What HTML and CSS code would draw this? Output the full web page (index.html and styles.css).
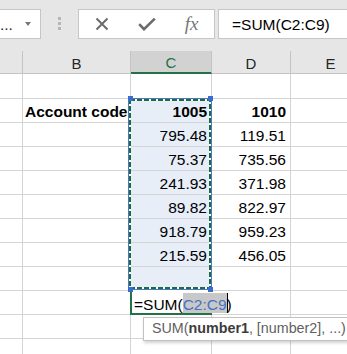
FILE: index.html
```html
<!DOCTYPE html>
<html>
<head>
<meta charset="utf-8">
<link rel="stylesheet" href="styles.css">
</head>
<body>
<div class="app">
  <div class="toolbar">
    <div class="namebox"><span class="nb-text">...</span><span class="nb-arrow"></span></div>
    <div class="grip"><i></i><i></i><i></i></div>
    <div class="fbtns">
      <div class="fbtn">
        <svg width="14" height="14" viewBox="0 0 14 14"><path d="M1.5 1.5 L12.5 12.5 M12.5 1.5 L1.5 12.5" stroke="#6b6b6b" stroke-width="2" fill="none"/></svg>
      </div>
      <div class="fbtn">
        <svg width="18" height="14" viewBox="0 0 18 14"><path d="M1.2 7.2 L6 12.2 L16.8 1.6" stroke="#6b6b6b" stroke-width="2.6" fill="none"/></svg>
      </div>
      <div class="fbtn"><span class="fx">fx</span></div>
    </div>
    <div class="finput">=SUM(C2:C9)</div>
  </div>

  <div class="sheet">
    <div class="grid">
      <div class="c h"></div><div class="c h">B</div><div class="c h hsel">C</div><div class="c h">D</div><div class="c h">E</div>

      <div class="c"></div><div class="c"></div><div class="c"></div><div class="c"></div><div class="c"></div>

      <div class="c"></div><div class="c b">Account code</div><div class="c num b hl">1005</div><div class="c num b">1010</div><div class="c"></div>
      <div class="c"></div><div class="c"></div><div class="c num hl">795.48</div><div class="c num">119.51</div><div class="c"></div>
      <div class="c"></div><div class="c"></div><div class="c num hl">75.37</div><div class="c num">735.56</div><div class="c"></div>
      <div class="c"></div><div class="c"></div><div class="c num hl">241.93</div><div class="c num">371.98</div><div class="c"></div>
      <div class="c"></div><div class="c"></div><div class="c num hl">89.82</div><div class="c num">822.97</div><div class="c"></div>
      <div class="c"></div><div class="c"></div><div class="c num hl">918.79</div><div class="c num">959.23</div><div class="c"></div>
      <div class="c"></div><div class="c"></div><div class="c num hl">215.59</div><div class="c num">456.05</div><div class="c"></div>
      <div class="c"></div><div class="c"></div><div class="c hl"></div><div class="c"></div><div class="c"></div>

      <div class="c"></div><div class="c"></div><div class="c"></div><div class="c"></div><div class="c"></div>
      <div class="c"></div><div class="c"></div><div class="c"></div><div class="c"></div><div class="c"></div>
      <div class="c"></div><div class="c"></div><div class="c"></div><div class="c"></div><div class="c"></div>
    </div>

    <div class="edit">=SUM(<span class="ref">C2:C9</span><span class="caret"></span>)</div>

    <svg class="selbox" width="84" height="192" viewBox="0 0 84 192">
      <rect x="0.5" y="0.5" width="83" height="191" fill="none" stroke="#4a78c8" stroke-width="1"/>
      <rect x="2" y="2" width="80" height="188" fill="none" stroke="#ffffff" stroke-width="2"/>
      <rect x="2" y="2" width="80" height="188" fill="none" stroke="#1e6b3f" stroke-width="2" stroke-dasharray="5 2"/>
    </svg>
    <span class="handle h-tl"></span>
    <span class="handle h-tr"></span>
    <span class="handle h-bl"></span>
    <span class="handle h-br"></span>

    <div class="tip">SUM(<b>number1</b>, [number2], ...)</div>
  </div>
</div>
</body>
</html>
```

FILE: styles.css
```css
* { box-sizing: border-box; }
html, body { margin: 0; padding: 0; }
body {
  width: 347px;
  height: 354px;
  overflow: hidden;
  background: #ffffff;
  font-family: "Liberation Sans", Arial, sans-serif;
  color: #000;
}
.app {
  position: relative;
  width: 347px;
  height: 354px;
  overflow: hidden;
}

/* ---------- toolbar ---------- */
.toolbar {
  height: 51px;
  background: #e6e6e6;
  display: flex;
  align-items: flex-start;
  padding-top: 9px;
}
.namebox {
  margin-left: -1px;
  width: 42px;
  height: 30px;
  flex: 0 0 auto;
  background: #fff;
  border: 1px solid #c6c6c6;
  display: flex;
  align-items: flex-start;
  padding-top: 2px;
  line-height: 26px;
  font-size: 15.5px;
  color: #222;
}
.nb-arrow {
  margin-left: 12px;
  margin-top: 10px;
  width: 0;
  height: 0;
  border-left: 3.5px solid transparent;
  border-right: 3.5px solid transparent;
  border-top: 4px solid #777;
}
.grip {
  margin-left: 17px;
  margin-top: 8px;
  display: flex;
  flex-direction: column;
  gap: 2px;
  flex: 0 0 auto;
}
.grip i {
  display: block;
  width: 3px;
  height: 3px;
  background: #b5b5b5;
}
.fbtns {
  margin-left: 17px;
  width: 137px;
  height: 30px;
  flex: 0 0 auto;
  background: #fff;
  border: 1px solid #c6c6c6;
  display: flex;
}
.fbtn {
  width: 45px;
  display: flex;
  align-items: center;
  justify-content: center;
}
.fbtn svg { display: block; }
.fx {
  font-family: "Liberation Serif", "Times New Roman", serif;
  font-style: italic;
  font-size: 19px;
  color: #777;
  line-height: 20px;
}
.finput {
  margin-left: 3px;
  flex: 1 0 auto;
  height: 30px;
  background: #fff;
  border: 1px solid #c6c6c6;
  border-right: none;
  padding: 2px 0 0 13px;
  line-height: 26px;
  font-size: 15.5px;
  color: #000;
  white-space: nowrap;
}

/* ---------- sheet ---------- */
.sheet { position: relative; }
.grid {
  display: grid;
  grid-template-columns: 23px 108px 81px 79px 80px;
  grid-template-rows: 23px 25px repeat(11, 24px);
}
.c {
  border-right: 1px solid #d4d4d4;
  border-bottom: 1px solid #d4d4d4;
  font-size: 15.5px;
  line-height: 18px;
  display: flex;
  align-items: flex-end;
  padding: 0 4px 1px 2px;
  white-space: nowrap;
  overflow: visible;
}
.num { justify-content: flex-end; }
.b { font-weight: bold; }
.hl { background: #e7eef8; }

.h {
  background: #e6e6e6;
  border-right-color: #c4c4c4;
  border-bottom-color: #c4c4c4;
  justify-content: center;
  font-size: 15px;
  color: #262626;
  padding: 0;
}
.hsel {
  background: #d2d2d2;
  color: #217346;
  border-bottom: 2px solid #217346;
}

/* edit cell */
.edit {
  position: absolute;
  left: 130px;
  top: 239px;
  width: 82px;
  height: 25px;
  background: #fff;
  border-left: 2px solid #217346;
  border-bottom: 2px solid #217346;
  padding: 3px 0 0 2px;
  font-size: 15.5px;
  line-height: 20px;
  white-space: nowrap;
  color: #000;
}
.ref {
  display: inline-block;
  background: #c8c8c8;
  color: #4472c4;
  padding-top: 3px;
  line-height: 17px;
  height: 20px;
}
.caret {
  display: inline-block;
  width: 1px;
  height: 20px;
  background: #000;
  vertical-align: -3px;
  margin-right: -1px;
}

/* selection */
.selbox {
  position: absolute;
  left: 128px;
  top: 47px;
  display: block;
}
.handle {
  position: absolute;
  width: 5px;
  height: 5px;
  background: #3a6ccf;
}
.h-tl { left: 128px; top: 45px; }
.h-tr { left: 208px; top: 45px; }
.h-bl { left: 128px; top: 236px; }
.h-br { left: 208px; top: 236px; }

/* tooltip */
.tip {
  position: absolute;
  left: 143px;
  top: 266px;
  width: 205px;
  height: 24px;
  background: #fff;
  border: 1px solid #c2c2c2;
  box-shadow: 1px 2px 3px rgba(0, 0, 0, 0.18);
  padding: 0 0 0 8px;
  font-size: 14.3px;
  line-height: 21px;
  color: #5f5f5f;
  white-space: nowrap;
}
.tip b { color: #3c3c3c; }
```
